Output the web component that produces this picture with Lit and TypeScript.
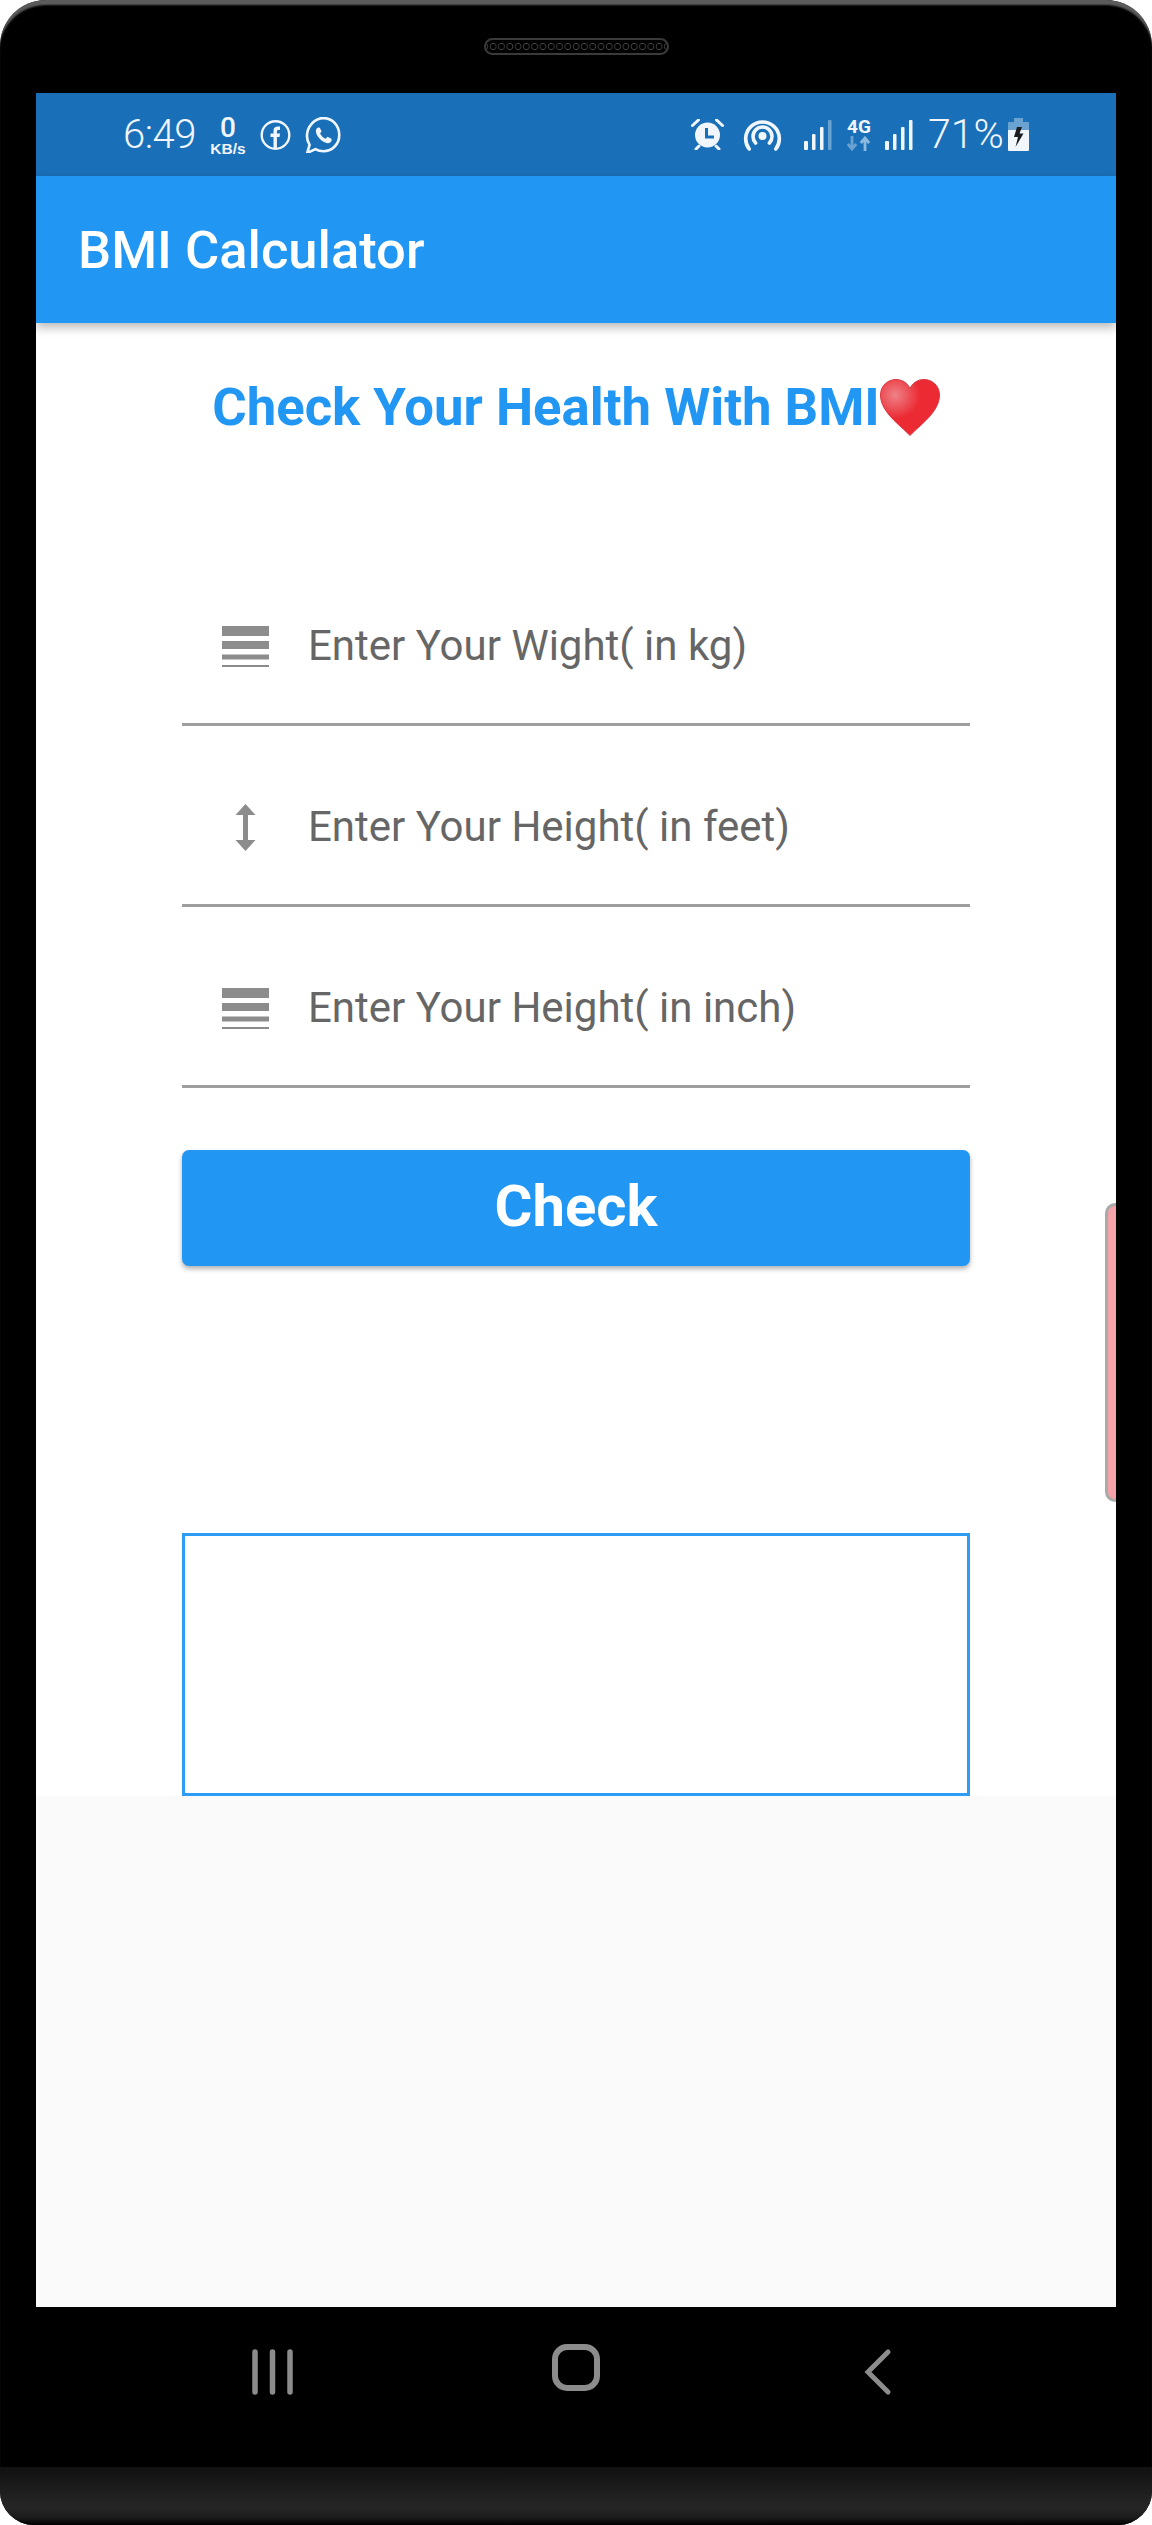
import { LitElement, html, css, svg } from "lit";
import { customElement, property } from "lit/decorators.js";

const lineWeight = html`<svg class="fieldicon" width="47" height="41" viewBox="0 0 47 41">
  <g fill="#8c8c8c">
    <rect y="0" width="47" height="10"></rect>
    <rect y="15" width="47" height="8"></rect>
    <rect y="28.5" width="47" height="5"></rect>
    <rect y="39" width="47" height="2"></rect>
  </g>
</svg>`;

const heightArrow = html`<svg class="fieldicon" width="47" height="47" viewBox="0 0 47 47">
  <path d="M23.5 0 L33.5 11 H26 V36 H33.5 L23.5 47 L13.5 36 H21 V11 H13.5 Z" fill="#8c8c8c"></path>
</svg>`;

// 電波アイコン
const signal = (lastBar: string) => svg`
  <rect x="0" y="21" width="4" height="9" rx="1" fill="#f1f6fc"></rect>
  <rect x="8" y="14" width="3.5" height="16" rx="1" fill="#f1f6fc"></rect>
  <rect x="16" y="7" width="3.5" height="23" rx="1" fill="#f1f6fc"></rect>
  <rect x="24" y="0" width="3.5" height="30" rx="1" fill="${lastBar}"></rect>
`;

@customElement("app-field")
export class AppField extends LitElement {
  static styles = css`
    :host {
      display: flex;
      align-items: center;
      box-sizing: border-box;
      height: 181px;
      padding: 22px 0 0 40px;
      border-bottom: 3px solid #9e9e9e;
    }
    .icon {
      width: 47px;
      display: flex;
      justify-content: center;
      margin: 3px 39px 0 0;
    }
    .label {
      font: 400 42px Roboto, sans-serif;
      color: #666;
      white-space: nowrap;
    }
  `;

  @property() label = "";

  render() {
    return html`
      <div class="icon"><slot></slot></div>
      <div class="label">${this.label}</div>
    `;
  }
}

@customElement("app-root")
export class AppRoot extends LitElement {
  static styles = css`
    :host {
      display: block;
      width: 1152px;
      height: 2525px;
      background: #fff;
      font-family: Roboto, sans-serif;
    }
    .device {
      height: 2525px;
      display: flex;
      flex-direction: column;
      background: #000;
      border-radius: 46px 46px 34px 34px;
      box-shadow: inset 0 6px 2px -1px #5c5c5c;
      overflow: hidden;
    }
    .topbezel {
      height: 93px;
      display: flex;
      justify-content: center;
      align-items: center;
    }
    .speaker {
      box-sizing: border-box;
      width: 185px;
      height: 17px;
      border: 2px solid #3a3a3a;
      border-radius: 9px;
      background: radial-gradient(circle, #000 2.4px, #4c4c4c 3px, #000 3.8px) 3px 0 / 8.3px 100%;
    }
    .screen {
      position: relative;
      height: 2214px;
      margin: 0 36px;
      display: flex;
      flex-direction: column;
      background: #fafafa;
      overflow: hidden;
    }
    .statusbar {
      height: 83px;
      flex: none;
      display: flex;
      align-items: flex-start;
      background: #1a70b8;
      color: #f1f6fc;
    }
    .statusbar svg {
      display: block;
      flex: none;
    }
    .time {
      margin: 18px 0 0 87px;
      font-size: 40px;
      font-weight: 300;
      line-height: 48px;
      letter-spacing: -0.5px;
      width: 87px;
    }
    .speed {
      width: 36px;
      margin-top: 22px;
      text-align: center;
      font: 700 15.5px/16px "Liberation Sans", sans-serif;
    }
    .speed b {
      display: block;
      font: 500 28px/26px Roboto, sans-serif;
      height: 26px;
    }
    .fb { margin: 26px 0 0 14px; }
    .wa { margin: 24px 0 0 14px; }
    .spacer { flex: 1; }
    .alarm { margin: 26px 0 0 0; }
    .hotspot { margin: 24px 0 0 19px; }
    .sig1 { margin: 27px 0 0 22px; }
    .fourg {
      width: 23px;
      margin: 26px 0 0 15px;
      text-align: center;
      font: 700 19px/16px Roboto, sans-serif;
    }
    .fourg svg { margin-top: 1px; }
    .sig2 { margin: 27px 0 0 15px; }
    .pct {
      margin: 17px 0 0 15px;
      font-size: 41px;
      font-weight: 300;
      line-height: 48px;
      width: 80px;
      white-space: nowrap;
    }
    .battery { margin: 25px 87px 0 0; }
    .appbar {
      position: relative;
      z-index: 1;
      height: 147px;
      flex: none;
      display: flex;
      align-items: center;
      padding-left: 42px;
      background: #2196f3;
      color: #fff;
      font-size: 52.5px;
      font-weight: 500;
      box-shadow: 0 4px 10px rgba(0, 0, 0, 0.3);
    }
    .content {
      height: 1473px;
      flex: none;
      box-sizing: border-box;
      background: #fff;
      padding: 0 146px;
    }
    .heading {
      height: 222px;
      display: flex;
      justify-content: center;
      align-items: flex-start;
      margin: 0 -60px;
      padding-top: 56px;
      box-sizing: border-box;
      color: #2196f3;
      font-size: 52.7px;
      font-weight: 700;
      line-height: 56px;
      white-space: nowrap;
    }
    .heading svg { flex: none; }
    .check {
      display: block;
      width: 100%;
      height: 116px;
      margin-top: 62px;
      padding: 0 0 4px;
      border: 0;
      border-radius: 7px;
      background: #2196f3;
      color: #fff;
      font: 700 58px Roboto, sans-serif;
      box-shadow: 0 3px 5px rgba(0, 0, 0, 0.3);
    }
    .result {
      box-sizing: border-box;
      height: 263px;
      margin-top: 267px;
      border: 3px solid #2d9cf4;
    }
    .handle {
      position: absolute;
      top: 1110px;
      right: 0;
      box-sizing: border-box;
      width: 11px;
      height: 299px;
      background: #f5a3a9;
      border: 3px solid #aaa;
      border-right: 0;
      border-radius: 10px 0 0 10px;
    }
    .nav {
      height: 160px;
      flex: none;
      box-sizing: border-box;
      padding-top: 36px;
      display: flex;
      justify-content: center;
      align-items: flex-start;
    }
    .nav svg {
      display: block;
      flex: none;
    }
    .chin {
      flex: 1;
      background: linear-gradient(#111 0, #262626 70%, #1a1a1a 88%, #000 100%);
    }
  `;

  render() {
    return html`
      <div class="device">
        <div class="topbezel"><div class="speaker"></div></div>
        <div class="screen">
          <div class="statusbar">
            <div class="time">6:49</div>
            <div class="speed"><b>0</b>KB/s</div>
            <svg class="fb" width="31" height="32" viewBox="0 0 30 32">
              <circle cx="15" cy="16" r="13.8" fill="none" stroke="#f1f6fc" stroke-width="2.4"></circle>
              <path d="M13 30 V18 H10 V14.5 H13 V11.5 C13 8.5 15 7.5 17.2 7.5 H19.5 V11 H18 C16.7 11 16.4 11.5 16.4 12.6 V14.5 H19.5 L19 18 H16.4 V30 Z" fill="#f1f6fc"></path>
            </svg>
            <svg class="wa" width="36" height="36" viewBox="0 1 33 33">
              <path d="M2 34 L4.2 26.6 C2.6 24 1.8 21.4 1.8 18.4 C1.8 10 8.6 2 17 2 C25.4 2 31.4 9 31.4 17.4 C31.4 25.8 25 32.4 17 32.4 C14.4 32.4 11.8 31.8 9.6 30.4 Z" fill="none" stroke="#f1f6fc" stroke-width="2.4" stroke-linejoin="round"></path>
              <path d="M12.2 10.6 C11 10.8 9.8 12.4 10 14.4 C10.4 19 16 24.8 20.8 25 C22.8 25 24.4 23.6 24.4 22.2 L24.2 21 L20.6 19.2 L19 21 C17 20.4 14.6 18 13.8 15.8 L15.2 14.2 L13.6 10.8 Z" fill="#f1f6fc"></path>
            </svg>
            <div class="spacer"></div>
            <svg class="alarm" width="33" height="31" viewBox="0 0 33 31">
              <circle cx="16.5" cy="16" r="12.5" fill="#f1f6fc"></circle>
              <path d="M1.5 6.5 L7.5 1 M31.5 6.5 L25.5 1 M5 30 L8 27 M28 30 L25 27" stroke="#f1f6fc" stroke-width="3" stroke-linecap="round"></path>
              <path d="M15.5 9 V18 H23" fill="none" stroke="#1a70b8" stroke-width="3"></path>
            </svg>
            <svg class="hotspot" width="39" height="34" viewBox="0 0 39 34">
              <g fill="none" stroke="#f1f6fc" stroke-width="3.6" stroke-linecap="round">
                <path d="M6.2 32 A16.8 16.8 0 1 1 32.8 32"></path>
                <path d="M12.6 26 A9.5 9.5 0 1 1 26.4 26"></path>
              </g>
              <circle cx="19.5" cy="19" r="4" fill="#f1f6fc"></circle>
            </svg>
            <svg class="sig1" width="28" height="30" viewBox="0 0 28 30">${signal("#6aa3d2")}</svg>
            <div class="fourg">
              4G
              <svg width="23" height="15" viewBox="0 0 23 15">
                <path d="M5 0 V12 M0.8 8 L5 13 L9.2 8" fill="none" stroke="#6aa3d2" stroke-width="2.8"></path>
                <path d="M18 15 V3 M13.8 7 L18 2 L22.2 7" fill="none" stroke="#8dbbe0" stroke-width="2.8"></path>
              </svg>
            </div>
            <svg class="sig2" width="28" height="30" viewBox="0 0 28 30">${signal("#f1f6fc")}</svg>
            <div class="pct">71%</div>
            <svg class="battery" width="21" height="33" viewBox="0 0 21 33">
              <path d="M6 0 H15 V4 H20 A1 1 0 0 1 21 5 V12 H0 V5 A1 1 0 0 1 1 4 H6 Z" fill="#6aa3d2"></path>
              <path d="M0 12 H21 V32 A1 1 0 0 1 20 33 H1 A1 1 0 0 1 0 32 Z" fill="#f1f6fc"></path>
              <path d="M9 9 L6 19 H10 L7.5 29 L15.5 15.5 H11.5 L14 9 Z" fill="#1a1c20"></path>
            </svg>
          </div>
          <div class="appbar">BMI Calculator</div>
          <div class="content">
            <div class="heading">
              Check Your Health With BMI<svg width="60" height="57" viewBox="0 0 60 57">
                <defs>
                  <radialGradient id="shine" cx="0.25" cy="0.28" r="0.42">
                    <stop offset="0" stop-color="#ee8288"></stop>
                    <stop offset="1" stop-color="#ec2a33"></stop>
                  </radialGradient>
                </defs>
                <path d="M30 56.5 C20 46 0.5 33 0.5 16 C0.5 6.5 8 0.5 16 0.5 C22.5 0.5 27.5 4 30 9.5 C32.5 4 37.5 0.5 44 0.5 C52 0.5 59.5 6.5 59.5 16 C59.5 33 40 46 30 56.5 Z" fill="url(#shine)" stroke="#d93a42" stroke-width="1"></path>
              </svg>
            </div>
            <app-field label="Enter Your Wight( in kg)">${lineWeight}</app-field>
            <app-field label="Enter Your Height( in feet)">${heightArrow}</app-field>
            <app-field label="Enter Your Height( in inch)">${lineWeight}</app-field>
            <button class="check">Check</button>
            <div class="result"></div>
          </div>
          <div class="handle"></div>
        </div>
        <div class="nav">
          <svg width="648" height="60" viewBox="0 0 648 60">
            <g fill="none" stroke="#8c8c8c" stroke-linecap="round">
              <path d="M3 9 V49 M20.5 9 V49 M38 9 V49" stroke-width="5.5"></path>
              <rect x="303" y="4" width="42" height="41" rx="12" stroke-width="6"></rect>
              <path d="M636 9 L616 29 L636 49" stroke-width="5"></path>
            </g>
          </svg>
        </div>
        <div class="chin"></div>
      </div>
    `;
  }
}
